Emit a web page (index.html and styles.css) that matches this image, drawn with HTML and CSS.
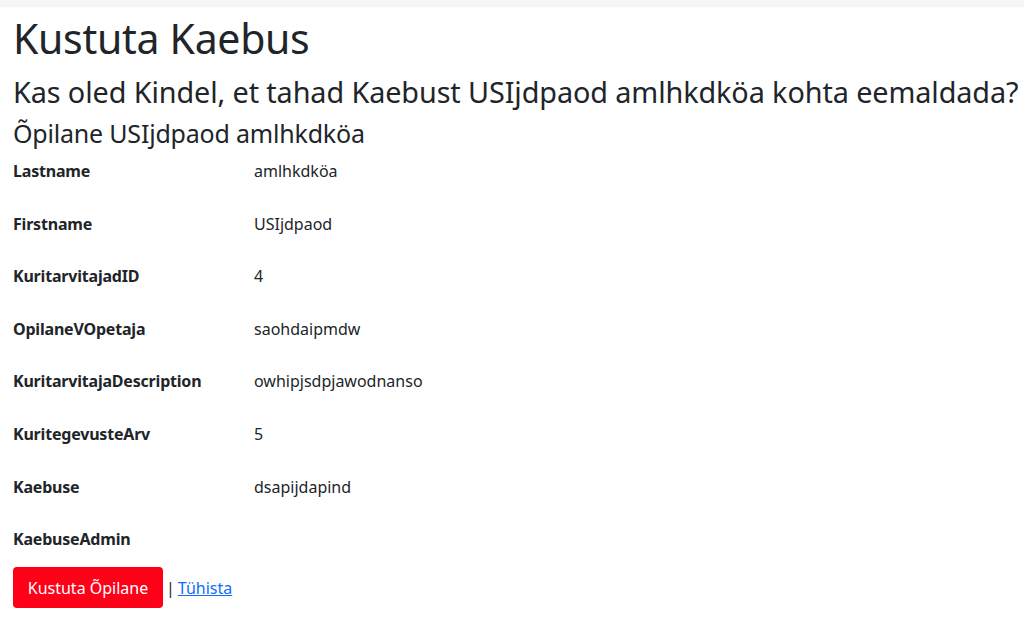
FILE: index.html
```html
<!DOCTYPE html>
<html lang="et">
<head>
<meta charset="utf-8">
<title>Kustuta Kaebus</title>
<link rel="stylesheet" href="styles.css">
</head>
<body>
<div class="topband"></div>
<main class="page">
  <h1 class="title">Kustuta Kaebus</h1>
  <h2 class="question">Kas oled Kindel, et tahad Kaebust USIjdpaod amlhkdköa kohta eemaldada?</h2>
  <h3 class="subject">Õpilane USIjdpaod amlhkdköa</h3>
  <dl class="details">
    <dt>Lastname</dt><dd>amlhkdköa</dd>
    <dt>Firstname</dt><dd>USIjdpaod</dd>
    <dt>KuritarvitajadID</dt><dd>4</dd>
    <dt>OpilaneVOpetaja</dt><dd>saohdaipmdw</dd>
    <dt>KuritarvitajaDescription</dt><dd>owhipjsdpjawodnanso</dd>
    <dt>KuritegevusteArv</dt><dd>5</dd>
    <dt>Kaebuse</dt><dd>dsapijdapind</dd>
    <dt>KaebuseAdmin</dt><dd></dd>
  </dl>
  <form class="actions">
    <button type="button" class="btn-danger">Kustuta Õpilane</button>
    <span class="sep">|</span>
    <a href="#" class="cancel">Tühista</a>
  </form>
</main>
</body>
</html>
```
FILE: styles.css
```css
html, body {
  margin: 0;
  padding: 0;
  background: #fdfdfd;
}
body {
  font-family: "Noto Sans", "Open Sans", sans-serif;
  color: #212529;
  font-size: 16px;
  line-height: 1.5;
}
.topband {
  height: 7px;
  background: #f6f6f6;
}
.page {
  padding: 0 0 0 13px;
  background: #fff;
  white-space: nowrap;
}
.title {
  margin: 2px 0 0;
  font-size: 41px;
  font-weight: 400;
  line-height: 58px;
  letter-spacing: -0.3px;
}
.question {
  margin: 0;
  font-size: 28.8px;
  font-weight: 400;
  line-height: 50px;
  letter-spacing: -0.1px;
}
.subject {
  margin: 0 0 10px;
  font-size: 25px;
  font-weight: 400;
  line-height: 32px;
  letter-spacing: -0.2px;
}
.details {
  display: grid;
  grid-template-columns: 241px 1fr;
  grid-auto-rows: 24px;
  row-gap: 28.6px;
  margin: 0;
  font-size: 16px;
}
.details dt {
  font-weight: 700;
  letter-spacing: -0.2px;
}
.details dd {
  margin: 0;
}
.actions {
  display: flex;
  align-items: center;
  gap: 3px;
  margin-top: 16px;
  padding-bottom: 30px;
}
.btn-danger {
  background: #ff0019;
  color: #fff;
  border: none;
  border-radius: 4px;
  height: 41px;
  width: 150px;
  font-family: inherit;
  font-size: 16px;
  padding: 0;
}
.sep {
  color: #212529;
}
.cancel {
  color: #0d6efd;
  font-size: 16px;
}
```
